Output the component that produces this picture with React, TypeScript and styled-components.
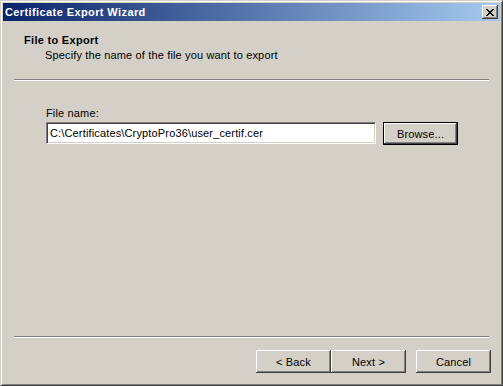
import { FC } from "react";
import styled, { createGlobalStyle } from "styled-components";

const face = "#d4d0c8";

const GlobalStyle = createGlobalStyle`
  html, body {
    margin: 0;
    padding: 0;
    background: ${face};
  }
  * {
    box-sizing: border-box;
  }
`;

export default function App() {
  return (
    <>
      <GlobalStyle />
      <Window>
        <TitleBar>
          <TitleText>Certificate Export Wizard</TitleText>
          <CloseButton aria-label="Close">
            <svg width="8" height="7" viewBox="0 0 8 7">
              <path
                d="M0 0h2v1h1v1h2V1h1V0h2v1H7v1H6v1H5v1h1v1h1v1h1v1H6V6H5V5H3v1H2v1H0V6h1V5h1V4h1V3H2V2H1V1H0z"
                fill="#000"
              />
            </svg>
          </CloseButton>
        </TitleBar>
        <Header>
          <HeaderTitle>File to Export</HeaderTitle>
          <HeaderSub>Specify the name of the file you want to export</HeaderSub>
        </Header>
        <Separator />
        <Body>
          <FieldLabel>File name:</FieldLabel>
          <FieldRow>
            <TextInput defaultValue="C:\Certificates\CryptoPro36\user_certif.cer" />
            <Button $default>Browse...</Button>
          </FieldRow>
        </Body>
        <Separator />
        <Footer>
          <ButtonPair>
            <Button>&lt; Back</Button>
            <Button>Next &gt;</Button>
          </ButtonPair>
          <Button>Cancel</Button>
        </Footer>
      </Window>
    </>
  );
}

const Window = styled.div`
  width: 503px;
  height: 386px;
  display: flex;
  flex-direction: column;
  background: ${face};
  border-top: 1px solid ${face};
  border-left: 1px solid ${face};
  border-right: 1px solid #404040;
  border-bottom: 1px solid #404040;
  box-shadow: inset 1px 1px 0 #fff, inset -1px -1px 0 #808080;
  padding: 2px;
  font-family: "Liberation Sans", Arial, sans-serif;
  font-size: 11px;
  letter-spacing: 0.15px;
  color: #000;
`;

const TitleBar = styled.div`
  height: 18px;
  display: flex;
  align-items: center;
  justify-content: space-between;
  padding: 0 2px 0 2px;
  background: linear-gradient(to right, #0a246a, #a6caf0);
`;

const TitleText = styled.span`
  color: #fff;
  font-weight: bold;
  font-size: 11px;
  letter-spacing: 0.4px;
`;

const CloseButton = styled.button`
  width: 16px;
  height: 14px;
  padding: 0;
  display: flex;
  align-items: center;
  justify-content: center;
  background: ${face};
  border: none;
  box-shadow: inset -1px -1px 0 #404040, inset 1px 1px 0 #fff,
    inset -2px -2px 0 #808080;
`;

const Header = styled.div`
  display: flex;
  flex-direction: column;
  padding: 12px 0 0 21px;
  height: 58px;
`;

const HeaderTitle = styled.div`
  font-weight: bold;
  line-height: 14px;
  letter-spacing: 0.3px;
`;

const HeaderSub = styled.div`
  line-height: 14px;
  margin-top: 1px;
  padding-left: 21px;
`;

const Separator = styled.div`
  margin: 0 11px;
  height: 2px;
  border-top: 1px solid #808080;
  border-bottom: 1px solid #fff;
`;

const Body = styled.div`
  flex: 1;
  padding: 25px 0 0 43px;
`;

const FieldLabel = styled.div`
  line-height: 14px;
  margin-bottom: 2px;
`;

const FieldRow = styled.div`
  display: flex;
  gap: 7px;
`;

const TextInput = styled.input`
  width: 330px;
  height: 22px;
  padding: 2px 3px;
  font: inherit;
  letter-spacing: 0.15px;
  color: #000;
  background: #fff;
  border-top: 1px solid #808080;
  border-left: 1px solid #808080;
  border-right: 1px solid #fff;
  border-bottom: 1px solid #fff;
  box-shadow: inset 1px 1px 0 #404040, inset -1px -1px 0 ${face};
  outline: none;
`;

const Button = styled.button<{ $default?: boolean }>`
  width: 75px;
  height: 23px;
  padding: 0;
  font: inherit;
  letter-spacing: 0.15px;
  color: #000;
  background: ${face};
  border: ${({ $default }) => ($default ? "1px solid #000" : "none")};
  box-shadow: inset -1px -1px 0 #404040, inset 1px 1px 0 #fff,
    inset -2px -2px 0 #808080;
`;

const ButtonPair = styled.div`
  display: flex;
`;

const Footer = styled.div`
  display: flex;
  justify-content: flex-end;
  gap: 10px;
  padding: 12px 9px 10px 0;
  height: 45px;
`;
